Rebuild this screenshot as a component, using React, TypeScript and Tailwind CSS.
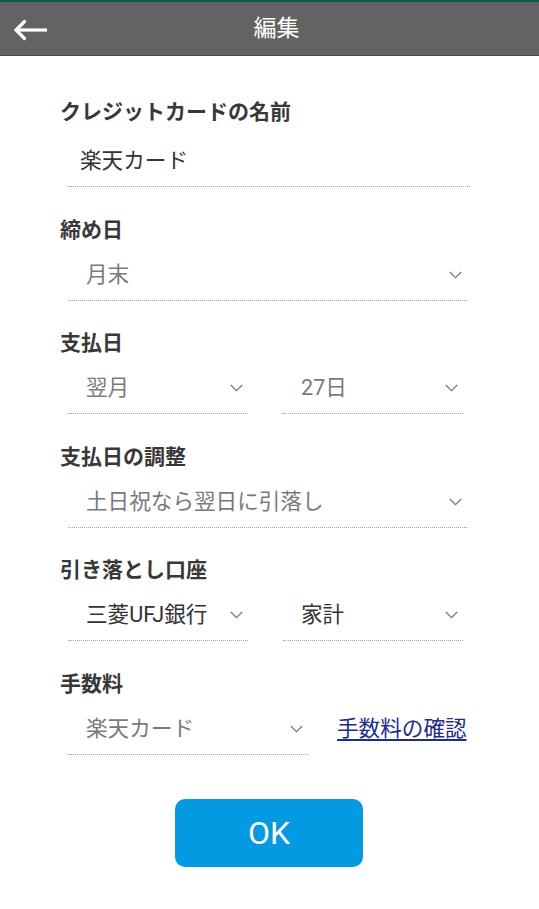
const font = { fontFamily: "Roboto, 'Noto Sans CJK JP', sans-serif" };

function Chevron() {
  return (
    <svg width="13" height="8" viewBox="0 0 13 8" className="shrink-0">
      <path d="M0.8 1 L6.5 6.6 L12.2 1" fill="none" stroke="#7a7a7a" strokeWidth="1.3" />
    </svg>
  );
}

function Label({ children }: { children: string }) {
  return <div className="h-[28px] text-[21px] leading-[28px] font-bold text-[#383838]">{children}</div>;
}

function Select({ value, dark, width }: { value: string; dark?: boolean; width: string }) {
  return (
    <div className={`${width} flex items-center pl-[18px] pr-[5px] pb-[11px] border-b border-dotted border-[#a0a0a0]`}>
      <span className={`flex-1 h-[28px] text-[21.6px] leading-[28px] ${dark ? "text-[#333]" : "text-[#7a7a7a]"}`}>{value}</span>
      <Chevron />
    </div>
  );
}

export default function App() {
  return (
    <div className="w-[539px] h-[909px] bg-white" style={font}>
      <div className="h-[2px] bg-[#0d5c4f]" />
      <header className="h-[54px] bg-[#636363] border-b border-[#4a4a4a] flex items-center relative">
        <svg width="36" height="22" viewBox="0 0 36 22" className="absolute left-[13px] top-[17px]">
          <path d="M3 11 H34" stroke="white" strokeWidth="3.2" />
          <path d="M11.5 2.5 L3 11 L11.5 19.5" fill="none" stroke="white" strokeWidth="3.2" strokeLinecap="round" />
        </svg>
        <h1 className="flex-1 pl-[14px] text-center text-white text-[23px] leading-[30px] font-normal">編集</h1>
      </header>

      <main className="pl-[60px] pt-[42px] flex flex-col">
        <Label>クレジットカードの名前</Label>
        <div className="ml-[8px] mt-[21px] w-[402px] pl-[12px] pb-[11px] border-b border-dotted border-[#a0a0a0]">
          <div className="h-[28px] text-[21.6px] leading-[28px] text-[#333]">楽天カード</div>
        </div>

        <div className="mt-[28.6px]"><Label>締め日</Label></div>
        <div className="ml-[8px] mt-[17px]"><Select value="月末" width="w-[399px]" /></div>

        <div className="mt-[28.6px]"><Label>支払日</Label></div>
        <div className="ml-[8px] mt-[17px] flex gap-[35px]">
          <Select value="翌月" width="w-[180px]" />
          <Select value="27日" width="w-[180px]" />
        </div>

        <div className="mt-[28.6px]"><Label>支払日の調整</Label></div>
        <div className="ml-[8px] mt-[17px]"><Select value="土日祝なら翌日に引落し" width="w-[399px]" /></div>

        <div className="mt-[28.6px]"><Label>引き落とし口座</Label></div>
        <div className="ml-[8px] mt-[17px] flex gap-[35px]">
          <Select value="三菱UFJ銀行" dark width="w-[180px]" />
          <Select value="家計" dark width="w-[180px]" />
        </div>

        <div className="mt-[28.6px]"><Label>手数料</Label></div>
        <div className="ml-[8px] mt-[17px] flex items-start gap-[29px]">
          <Select value="楽天カード" width="w-[240px]" />
          <a href="#" className="h-[28px] text-[21.6px] leading-[28px] text-[#1f2a8c] underline underline-offset-[3px]">手数料の確認</a>
        </div>

        <div className="mt-[44px] ml-[115px]">
          <button className="w-[188px] h-[68px] rounded-[10px] bg-[#049ae2] text-white text-[32px] leading-none">OK</button>
        </div>
      </main>
    </div>
  );
}
